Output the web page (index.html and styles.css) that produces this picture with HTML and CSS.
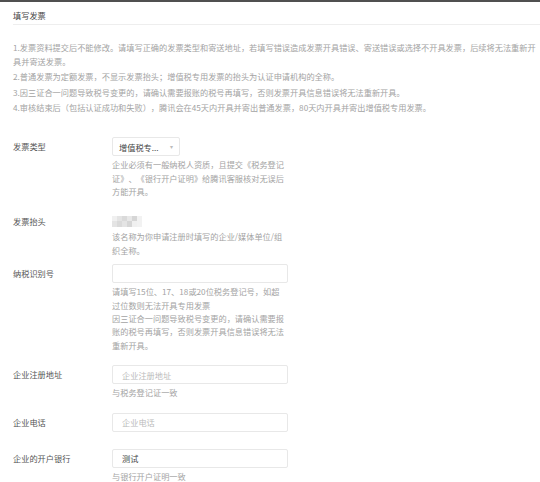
FILE: index.html
```html
<!DOCTYPE html>
<html lang="zh-CN">
<head>
<meta charset="utf-8">
<title>填写发票</title>
<link rel="stylesheet" href="styles.css">
</head>
<body>
<div class="topbar"></div>
<div class="page">
  <div class="header">填写发票</div>
  <div class="notes">
    <p>1.发票资料提交后不能修改。请填写正确的发票类型和寄送地址，若填写错误造成发票开具错误、寄送错误或选择不开具发票，后续将无法重新开具并寄送发票。</p>
    <p>2.普通发票为定额发票，不显示发票抬头；增值税专用发票的抬头为认证申请机构的全称。</p>
    <p>3.因三证合一问题导致税号变更的，请确认需要报账的税号再填写，否则发票开具信息错误将无法重新开具。</p>
    <p>4.审核结束后（包括认证成功和失败），腾讯会在45天内开具并寄出普通发票，80天内开具并寄出增值税专用发票。</p>
  </div>
  <div class="form">
    <div class="row">
      <div class="label">发票类型</div>
      <div class="field">
        <div class="select"><span class="select-text">增值税专...</span><span class="arrow">▾</span></div>
        <div class="help">企业必须有一般纳税人资质，且提交《税务登记证》、《银行开户证明》给腾讯客服核对无误后方能开具。</div>
      </div>
    </div>
    <div class="row row-title">
      <div class="label label-short">发票抬头</div>
      <div class="field">
        <div class="blur-wrap">
          <div class="blur">
            <span class="c1"></span><span class="c2"></span><span class="c3"></span><span class="c4"></span><span class="c5"></span><span class="c6"></span>
            <span class="c2"></span><span class="c3"></span><span class="c2"></span><span class="c5"></span><span class="c1"></span><span class="c6"></span>
          </div>
        </div>
        <div class="help">该名称为你申请注册时填写的企业/媒体单位/组织全称。</div>
      </div>
    </div>
    <div class="row row-tax">
      <div class="label">纳税识别号</div>
      <div class="field">
        <input class="input" type="text">
        <div class="help">请填写15位、17、18或20位税务登记号，如超<br>过位数则无法开具专用发票<br>因三证合一问题导致税号变更的，请确认需要报账的税号再填写，否则发票开具信息错误将无法重新开具。</div>
      </div>
    </div>
    <div class="row">
      <div class="label">企业注册地址</div>
      <div class="field">
        <input class="input" type="text" placeholder="企业注册地址">
        <div class="help">与税务登记证一致</div>
      </div>
    </div>
    <div class="row">
      <div class="label">企业电话</div>
      <div class="field">
        <input class="input" type="text" placeholder="企业电话">
      </div>
    </div>
    <div class="row row-bank">
      <div class="label">企业的开户银行</div>
      <div class="field">
        <input class="input" type="text" value="测试">
        <div class="help">与银行开户证明一致</div>
      </div>
    </div>
  </div>
</div>
</body>
</html>
```
FILE: styles.css
```css
html, body {
  margin: 0;
  padding: 0;
  background: #ffffff;
}
body {
  font-family: "Noto Sans CJK SC", "Noto Sans", sans-serif;
  font-size: 8.2px;
  color: #444;
  overflow: hidden;
  text-spacing-trim: space-all;
}
.topbar {
  height: 2px;
  background: #505050;
}
.page {
  padding-left: 13px;
}
.header {
  padding-top: 5px;
  line-height: 17px;
  height: 17px;
  color: #444;
  border-bottom: 1px solid #eeeeee;
}
.notes {
  margin-top: 15px;
  color: #a3a3a3;
}
.notes p {
  margin: 0;
  padding-bottom: 1.3px;
  line-height: 14px;
}
.form {
  margin-top: 22px;
  display: flex;
  flex-direction: column;
  gap: 13px;
}
.row {
  display: flex;
  align-items: flex-start;
}
.row-title { margin-top: 3px; }
.row-tax { margin-top: -6px; }
.row-bank { margin-top: 4px; }
.label {
  width: 99px;
  flex: none;
  line-height: 19px;
  color: #555;
}
.label-short {
  line-height: 14px;
}
.field {
  width: 176px;
  display: flex;
  flex-direction: column;
}
.help {
  margin-top: 2px;
  line-height: 13.4px;
  color: #a3a3a3;
}
.select {
  width: 68px;
  height: 19px;
  box-sizing: border-box;
  border: 1px solid #e8e8e8;
  border-radius: 2px;
  display: flex;
  align-items: center;
  justify-content: space-between;
  padding: 0 6px 0 6px;
  color: #444;
}
.arrow {
  color: #bbb;
  font-size: 6px;
}
.input {
  width: 176px;
  height: 19px;
  box-sizing: border-box;
  border: 1px solid #e8e8e8;
  border-radius: 2px;
  padding: 0 0 0 9px;
  margin: 0;
  font-family: "Noto Sans CJK SC", "Noto Sans", sans-serif;
  font-size: 8.2px;
  color: #444;
  background: #fff;
  outline: none;
}
.input::placeholder {
  color: #bbb;
}
.blur-wrap {
  height: 14px;
  display: flex;
  align-items: center;
}
.blur {
  display: grid;
  grid-template-columns: repeat(6, 5px);
  grid-template-rows: 5.5px 5.5px;
  filter: blur(0.6px);
}
.blur span { display: block; }
.blur .c1 { background: #f0f0f0; }
.blur .c2 { background: #e4e4e4; }
.blur .c3 { background: #dadada; }
.blur .c4 { background: #e8e8e8; }
.blur .c5 { background: #d6d6d6; }
.blur .c6 { background: #f2f2f2; }
```
